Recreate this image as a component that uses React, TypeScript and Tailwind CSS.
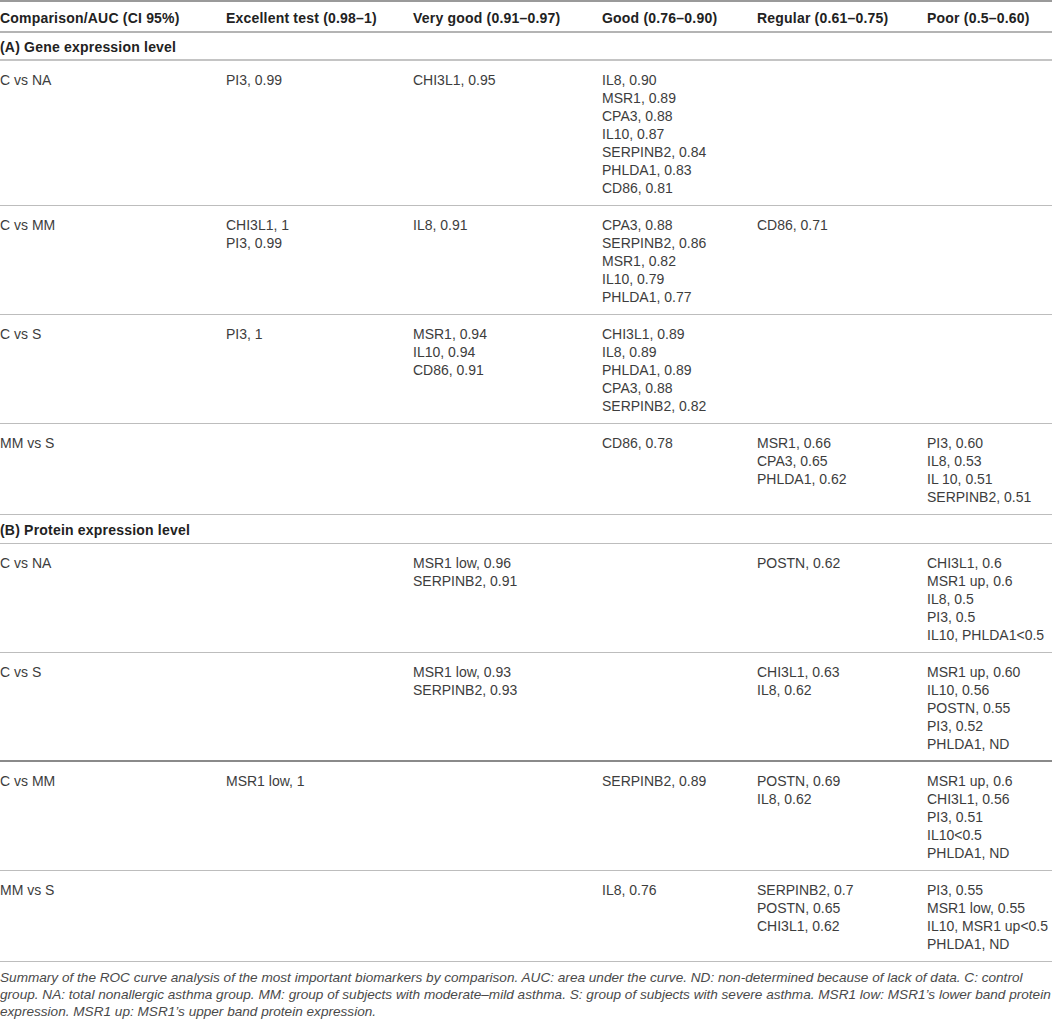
import React from "react";

type Row = { label: string; cells: string[][] };

const sectionA: Row[] = [
  {
    label: "C vs NA",
    cells: [
      ["PI3, 0.99"],
      ["CHI3L1, 0.95"],
      ["IL8, 0.90", "MSR1, 0.89", "CPA3, 0.88", "IL10, 0.87", "SERPINB2, 0.84", "PHLDA1, 0.83", "CD86, 0.81"],
      [],
      [],
    ],
  },
  {
    label: "C vs MM",
    cells: [
      ["CHI3L1, 1", "PI3, 0.99"],
      ["IL8, 0.91"],
      ["CPA3, 0.88", "SERPINB2, 0.86", "MSR1, 0.82", "IL10, 0.79", "PHLDA1, 0.77"],
      ["CD86, 0.71"],
      [],
    ],
  },
  {
    label: "C vs S",
    cells: [
      ["PI3, 1"],
      ["MSR1, 0.94", "IL10, 0.94", "CD86, 0.91"],
      ["CHI3L1, 0.89", "IL8, 0.89", "PHLDA1, 0.89", "CPA3, 0.88", "SERPINB2, 0.82"],
      [],
      [],
    ],
  },
  {
    label: "MM vs S",
    cells: [
      [],
      [],
      ["CD86, 0.78"],
      ["MSR1, 0.66", "CPA3, 0.65", "PHLDA1, 0.62"],
      ["PI3, 0.60", "IL8, 0.53", "IL 10, 0.51", "SERPINB2, 0.51"],
    ],
  },
];

const sectionB: Row[] = [
  {
    label: "C vs NA",
    cells: [
      [],
      ["MSR1 low, 0.96", "SERPINB2, 0.91"],
      [],
      ["POSTN, 0.62"],
      ["CHI3L1, 0.6", "MSR1 up, 0.6", "IL8, 0.5", "PI3, 0.5", "IL10, PHLDA1<0.5"],
    ],
  },
  {
    label: "C vs S",
    cells: [
      [],
      ["MSR1 low, 0.93", "SERPINB2, 0.93"],
      [],
      ["CHI3L1, 0.63", "IL8, 0.62"],
      ["MSR1 up, 0.60", "IL10, 0.56", "POSTN, 0.55", "PI3, 0.52", "PHLDA1, ND"],
    ],
  },
  {
    label: "C vs MM",
    cells: [
      ["MSR1 low, 1"],
      [],
      ["SERPINB2, 0.89"],
      ["POSTN, 0.69", "IL8, 0.62"],
      ["MSR1 up, 0.6", "CHI3L1, 0.56", "PI3, 0.51", "IL10<0.5", "PHLDA1, ND"],
    ],
  },
  {
    label: "MM vs S",
    cells: [
      [],
      [],
      ["IL8, 0.76"],
      ["SERPINB2, 0.7", "POSTN, 0.65", "CHI3L1, 0.62"],
      ["PI3, 0.55", "MSR1 low, 0.55", "IL10, MSR1 up<0.5", "PHLDA1, ND"],
    ],
  },
];

const gridCols = "grid grid-cols-[226px_187px_189px_155px_170px_1fr]";

function DataRow({ row, rowClass }: { row: Row; rowClass: string }) {
  return (
    <div className={`${gridCols} ${rowClass} pt-[10px] text-[14px] leading-[18px] text-[#3d3d3d]`}>
      <div className="whitespace-nowrap">{row.label}</div>
      {row.cells.map((c, i) => (
        <div key={i} className="flex flex-col whitespace-nowrap">
          {c.map((t, j) => (
            <div key={j}>{t}</div>
          ))}
        </div>
      ))}
    </div>
  );
}

export default function App() {
  const headers = [
    "Comparison/AUC (CI 95%)",
    "Excellent test (0.98–1)",
    "Very good (0.91–0.97)",
    "Good (0.76–0.90)",
    "Regular (0.61–0.75)",
    "Poor (0.5–0.60)",
  ];
  return (
    <div
      className="w-[1052px] h-[1019px] bg-white overflow-hidden"
      style={{ fontFamily: '"Liberation Sans", Arial, sans-serif' }}
    >
      <div className="border-t-2 border-[#9a9a9a]">
        <div
          className={`${gridCols} h-[31px] pt-[3px] items-center border-b-2 border-[#b4b4b4] text-[14px] font-bold tracking-[0.2px] text-[#222]`}
        >
          {headers.map((h) => (
            <div key={h} className="whitespace-nowrap">
              {h}
            </div>
          ))}
        </div>
        <div className="h-[28px] pt-[2px] flex items-center border-b-2 border-[#c4c4c4] text-[14px] font-bold tracking-[0.2px] text-[#222]">
          (A) Gene expression level
        </div>
        {sectionA.map((r, i) => (
          <DataRow key={i} row={r} rowClass="pb-[8px] border-b border-[#bdbdbd]" />
        ))}
        <div className="h-[29px] pt-[2px] flex items-center border-b border-[#bdbdbd] text-[14px] font-bold tracking-[0.2px] text-[#222]">
          (B) Protein expression level
        </div>
        {sectionB.map((r, i) => (
          <DataRow
            key={i}
            row={r}
            rowClass={i === 1 ? "pb-[7px] border-b-2 border-[#8a8a8a]" : "pb-[8px] border-b border-[#bdbdbd]"}
          />
        ))}
      </div>
      <p className="mt-[7px] text-[13.6px] leading-[17px] italic text-[#4a4a4a]">
        Summary of the ROC curve analysis of the most important biomarkers by comparison. AUC: area under the curve. ND:
        non-determined because of lack of data. C: control group. NA: total nonallergic asthma group. MM: group of
        subjects with moderate–mild asthma. S: group of subjects with severe asthma. MSR1 low: MSR1’s lower band protein
        expression. MSR1 up: MSR1’s upper band protein expression.
      </p>
    </div>
  );
}
